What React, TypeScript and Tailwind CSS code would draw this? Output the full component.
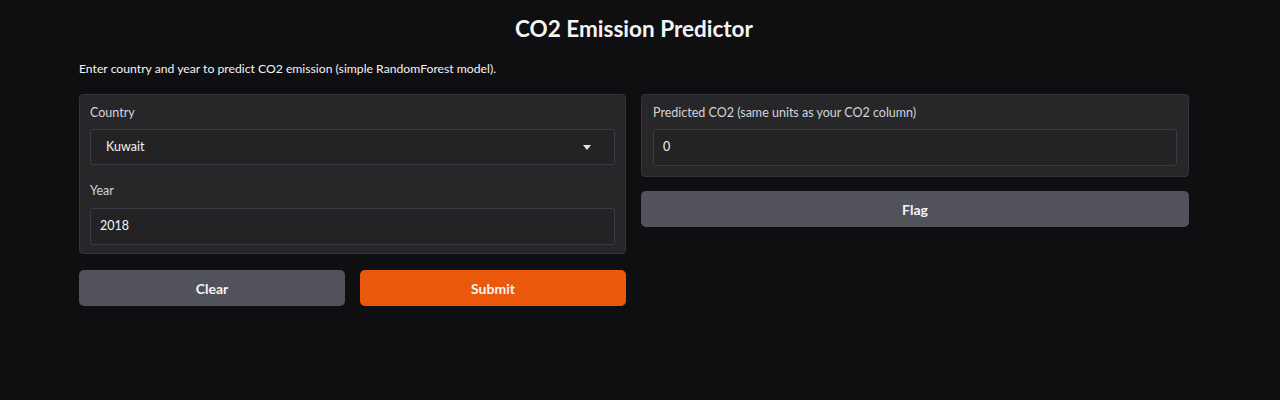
function Label({ children }: { children: React.ReactNode }) {
  return <p className="text-[12.5px] leading-[18px] text-[#d4d4d8]">{children}</p>;
}

export default function App() {
  return (
    <div className="min-h-[400px] w-full bg-[#0f0f11] font-['Lato',sans-serif] text-[#e4e4e7]">
      <div className="ml-[79px] w-[1110px] pt-[15px]">
        <h1 className="text-center text-[22.5px] font-bold leading-[28px] text-[#f4f4f5]">CO2 Emission Predictor</h1>
        <p className="mt-[17px] text-[12.2px] leading-[18px] text-[#f4f4f5]">
          Enter country and year to predict CO2 emission (simple RandomForest model).
        </p>

        <div className="mt-[16px] grid grid-cols-[547px_548px] gap-[15px]">
          {/* inputs */}
          <div className="flex flex-col gap-[16px]">
            <div className="rounded-[4px] border border-[#34343a] bg-[#27272a] px-[10px] pb-[8px] pt-[9px]">
              <Label>Country</Label>
              <div className="mt-[7px] flex h-[36px] items-center justify-between rounded-[3px] border border-[#3a3a40] bg-[#232326] pl-[15px] pr-[23px]">
                <span className="text-[12.5px] text-[#f4f4f5]">Kuwait</span>
                <svg width="8" height="5" viewBox="0 0 10 6"><path d="M0 0h10L5 6z" fill="#e4e4e7" /></svg>
              </div>
              <div className="mt-[17px]">
                <Label>Year</Label>
              </div>
              <div className="mt-[8px] flex h-[37px] items-center rounded-[3px] border border-[#3a3a40] bg-[#232326] px-[9px]">
                <span className="text-[12.5px] text-[#f4f4f5]">2018</span>
              </div>
            </div>
            <div className="grid grid-cols-2 gap-[15px]">
              <button className="h-[36px] rounded-[5px] bg-[#52525b] text-[14px] font-bold text-[#f4f4f5]">Clear</button>
              <button className="h-[36px] rounded-[5px] bg-[#ea580c] text-[14px] font-bold text-[#f4f4f5]">Submit</button>
            </div>
          </div>

          {/* outputs */}
          <div className="flex flex-col gap-[14px]">
            <div className="rounded-[4px] border border-[#34343a] bg-[#27272a] px-[11px] pb-[10px] pt-[9px]">
              <Label>Predicted CO2 (same units as your CO2 column)</Label>
              <div className="mt-[7px] flex h-[37px] items-center rounded-[3px] border border-[#3a3a40] bg-[#232326] px-[9px]">
                <span className="text-[12.5px] text-[#f4f4f5]">0</span>
              </div>
            </div>
            <button className="h-[36px] rounded-[5px] bg-[#52525b] text-[14px] font-bold text-[#f4f4f5]">Flag</button>
          </div>
        </div>
      </div>
    </div>
  );
}
